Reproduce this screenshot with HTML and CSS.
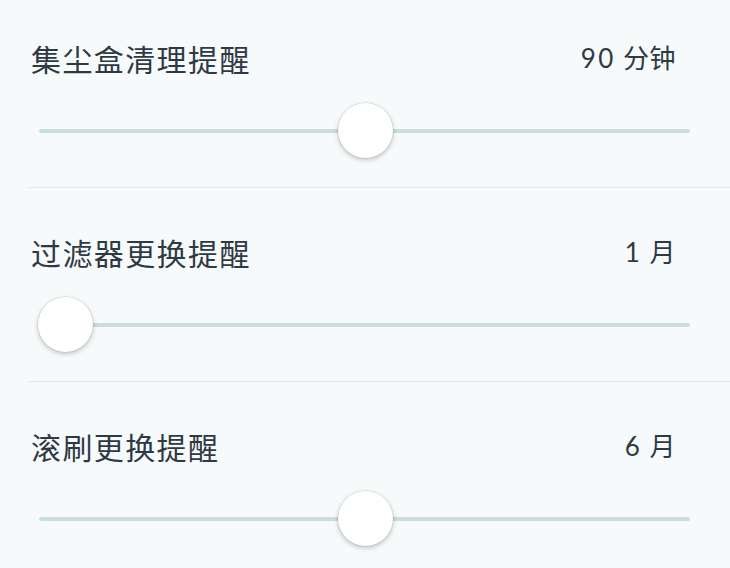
FILE: index.html
```html
<!DOCTYPE html>
<html lang="zh-CN">
<head>
<meta charset="utf-8">
<title>提醒设置</title>
<link rel="stylesheet" href="styles.css">
</head>
<body>
<div class="list">
  <div class="row first">
    <div class="header">
      <span class="title">集尘盒清理提醒</span>
      <span class="value"><span class="num">90</span> 分钟</span>
    </div>
    <div class="slider">
      <div class="track"></div>
      <div class="thumb" style="left: calc((100% - 55px) * 0.5)"></div>
    </div>
  </div>
  <div class="row">
    <div class="header">
      <span class="title">过滤器更换提醒</span>
      <span class="value"><span class="num">1</span> 月</span>
    </div>
    <div class="slider">
      <div class="track"></div>
      <div class="thumb" style="left: calc((100% - 55px) * 0)"></div>
    </div>
  </div>
  <div class="row">
    <div class="header">
      <span class="title">滚刷更换提醒</span>
      <span class="value"><span class="num">6</span> 月</span>
    </div>
    <div class="slider">
      <div class="track"></div>
      <div class="thumb" style="left: calc((100% - 55px) * 0.5)"></div>
    </div>
  </div>
</div>
</body>
</html>
```
FILE: styles.css
```css
html, body {
  margin: 0;
  padding: 0;
  background: #f6fafb;
  overflow: hidden;
}
body {
  width: 730px;
  height: 568px;
  font-family: "Noto Sans CJK SC", "Noto Sans", sans-serif;
  color: #2f3944;
}
.list {
  padding-left: 29px;
}
.row {
  padding-top: 44px;
  padding-bottom: 28px;
  border-bottom: 1px solid #d8e9e8;
}
.row.first {
  padding-top: 38px;
}
.header {
  height: 40px;
  display: flex;
  align-items: center;
  justify-content: space-between;
  padding-left: 2px;
  padding-right: 54px;
}
.title {
  font-size: 30px;
  line-height: 40px;
  letter-spacing: 1.4px;
}
.value {
  font-family: "Lato", "Noto Sans CJK SC", sans-serif;
  font-size: 26px;
  line-height: 40px;
  letter-spacing: 0.5px;
}
.num {
  letter-spacing: 2.5px;
}
.slider {
  position: relative;
  margin-top: 25px;
  margin-left: 9px;
  width: 654px;
  height: 56px;
}
.track {
  position: absolute;
  left: 1px;
  right: 2px;
  top: 26px;
  height: 4px;
  border-radius: 2px;
  background: #c8dfde;
}
.thumb {
  position: absolute;
  top: 0;
  width: 55px;
  height: 55px;
  border-radius: 50%;
  background: #ffffff;
  box-shadow: 0 0 0 0.6px rgba(0, 0, 0, 0.12), 0 2px 5px rgba(0, 0, 0, 0.22);
}
```
